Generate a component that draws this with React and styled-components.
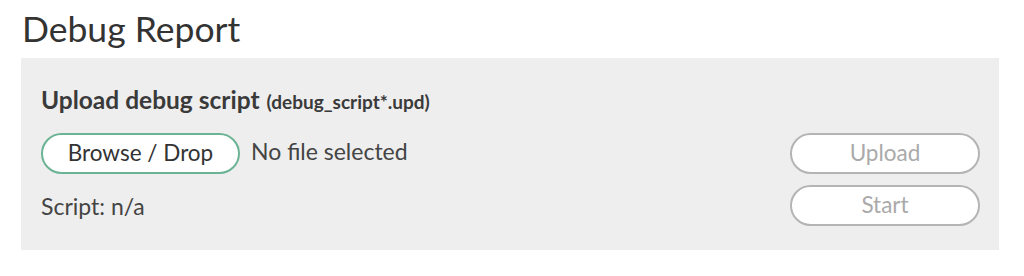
import React from "react";
import styled, { createGlobalStyle } from "styled-components";

const Global = createGlobalStyle`
  html, body { margin: 0; padding: 0; background: #ffffff; }
  body { font-family: "Lato", "Open Sans", sans-serif; color: #333; }
`;

const Page = styled.div`
  padding: 5px 25px 0 21px;
  width: 978px;
`;

const Title = styled.h1`
  margin: 0 0 5px 1px;
  height: 48px;
  line-height: 48px;
  font-size: 35.5px;
  font-weight: 400;
  color: #333;
`;

const Panel = styled.section`
  background: #eeeeee;
  padding: 27px 19px 24px 20px;
  display: flex;
  flex-direction: column;
`;

const Heading = styled.h2`
  margin: 0 0 18px 0;
  height: 30px;
  line-height: 30px;
  font-size: 24.5px;
  font-weight: 700;
  color: #3a3a3a;
  display: flex;
  align-items: baseline;
  gap: 7px;
`;

const Hint = styled.span`
  font-size: 19px;
  font-weight: 700;
  color: #3a3a3a;
`;

const Grid = styled.div`
  display: grid;
  grid-template-columns: 1fr 190px;
  grid-template-rows: 41px 41px;
  row-gap: 11px;
`;

const Row = styled.div`
  display: flex;
  align-items: center;
  gap: 11px;
`;

const PillButton = styled.button`
  box-sizing: border-box;
  height: 41px;
  width: ${(p) => p.$width}px;
  border-radius: 21px;
  border: 2px solid ${(p) => (p.$disabled ? "#b4b4b4" : "#6bb395")};
  background: #ffffff;
  color: ${(p) => (p.$disabled ? "#aaaaaa" : "#333333")};
  font-family: "Lato", "Open Sans", sans-serif;
  font-size: 22.5px;
  line-height: 1;
  padding: 0;
  cursor: ${(p) => (p.$disabled ? "default" : "pointer")};
`;

const FileText = styled.span`
  font-size: 23px;
  line-height: 1;
  color: #444;
  margin-bottom: 4px;
`;

const Label = styled.span`
  font-size: 23px;
  color: #444;
  display: flex;
  align-items: center;
`;

export default function App() {
  return (
    <>
      <Global />
      <Page>
        <Title>Debug Report</Title>
        <Panel>
          <Heading>
            Upload debug script <Hint>(debug_script*.upd)</Hint>
          </Heading>
          <Grid>
            <Row>
              <PillButton $width={199}>Browse / Drop</PillButton>
              <FileText>No file selected</FileText>
            </Row>
            <PillButton $width={190} $disabled>Upload</PillButton>
            <Label>Script: n/a</Label>
            <PillButton $width={190} $disabled>Start</PillButton>
          </Grid>
        </Panel>
      </Page>
    </>
  );
}
